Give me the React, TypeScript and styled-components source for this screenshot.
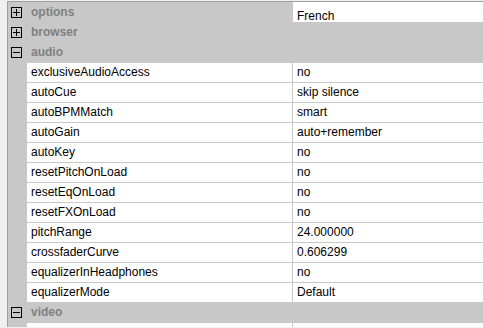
import React from "react";
import styled, { createGlobalStyle } from "styled-components";

interface Prop {
  name: string;
  value: string;
}

const audioProps: Prop[] = [
  { name: "exclusiveAudioAccess", value: "no" },
  { name: "autoCue", value: "skip silence" },
  { name: "autoBPMMatch", value: "smart" },
  { name: "autoGain", value: "auto+remember" },
  { name: "autoKey", value: "no" },
  { name: "resetPitchOnLoad", value: "no" },
  { name: "resetEqOnLoad", value: "no" },
  { name: "resetFXOnLoad", value: "no" },
  { name: "pitchRange", value: "24.000000" },
  { name: "crossfaderCurve", value: "0.606299" },
  { name: "equalizerInHeadphones", value: "no" },
  { name: "equalizerMode", value: "Default" },
];

const ToggleBox: React.FC<{ open: boolean }> = ({ open }) => (
  <BoxIcon width="11" height="11" viewBox="0 0 11 11">
    <rect x="0.5" y="0.5" width="10" height="10" fill="none" stroke="#000" />
    <line x1="2" y1="5.5" x2="9" y2="5.5" stroke="#000" />
    {!open && <line x1="5.5" y1="2" x2="5.5" y2="9" stroke="#000" />}
  </BoxIcon>
);

const Group: React.FC<{ title: string; open: boolean; value?: string }> = ({
  title,
  open,
  value,
}) => (
  <GroupRow>
    <GroupLabel>
      <ToggleBox open={open} />
      <GroupTitle>{title}</GroupTitle>
    </GroupLabel>
    {value !== undefined && <GroupValue>{value}</GroupValue>}
  </GroupRow>
);

const PropRow: React.FC<Prop> = ({ name, value }) => (
  <Row>
    <Indent />
    <NameCell>{name}</NameCell>
    <ValueCell>{value}</ValueCell>
  </Row>
);

const App: React.FC = () => {
  return (
    <>
      <GlobalStyle />
      <Frame>
        <Group title="options" open={false} value="French" />
        <Group title="browser" open={false} />
        <Group title="audio" open={true} />
        {audioProps.map((p) => (
          <PropRow key={p.name} name={p.name} value={p.value} />
        ))}
        <Group title="video" open={true} />
        <PropRow name="" value="" />
      </Frame>
    </>
  );
};

export default App;

/** ============================= styled-components ============================= */

const GlobalStyle = createGlobalStyle`
  html, body {
    margin: 0;
    height: 328px;
    overflow: hidden;
    background: #f0f0f0;
    font-family: "Liberation Sans", Arial, sans-serif;
    font-size: 12px;
  }
`;

const Frame = styled.div`
  margin: 1px 0 0 7px;
  border-left: 1px solid #a0a0a0;
  border-top: 1px solid #a0a0a0;
  background: #c8c8c8;
  height: 326px;
  box-sizing: border-box;
  overflow: hidden;
`;

const GroupRow = styled.div`
  display: flex;
  height: 20px;
`;

const GroupLabel = styled.div`
  width: 285px;
  display: flex;
  align-items: center;
  padding-left: 3px;
  box-sizing: border-box;
`;

const BoxIcon = styled.svg`
  display: block;
  flex: none;
  shape-rendering: crispEdges;
`;

const GroupTitle = styled.span`
  margin-left: 9px;
  font-weight: bold;
  color: #808080;
  line-height: 20px;
`;

const GroupValue = styled.div`
  flex: 1;
  background: #ffffff;
  padding: 8px 0 0 4px;
  line-height: 12px;
  color: #000;
  overflow: hidden;
`;

const Row = styled.div`
  display: flex;
  height: 20px;
`;

const Indent = styled.div`
  width: 19px;
  flex: none;
`;

const NameCell = styled.div`
  width: 266px;
  flex: none;
  box-sizing: border-box;
  background: #ffffff;
  border-top: 1px solid #c8c8c8;
  border-right: 1px solid #c8c8c8;
  padding-left: 4px;
  line-height: 19px;
  color: #000;
  white-space: nowrap;
  overflow: hidden;
`;

const ValueCell = styled.div`
  flex: 1;
  background: #ffffff;
  border-top: 1px solid #c8c8c8;
  padding-left: 4px;
  line-height: 19px;
  color: #000;
  white-space: nowrap;
`;
